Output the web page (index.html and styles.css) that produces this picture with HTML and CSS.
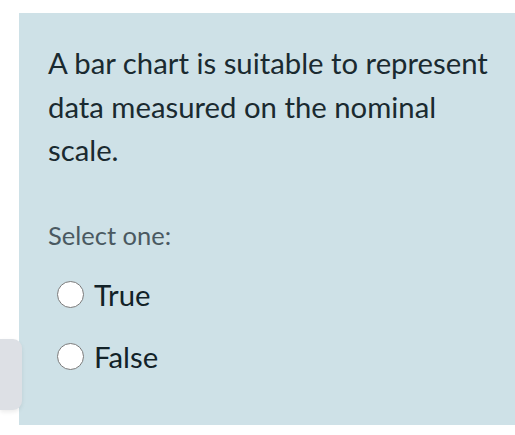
FILE: index.html
```html
<!DOCTYPE html>
<html lang="en">
<head>
<meta charset="utf-8">
<link rel="stylesheet" href="styles.css">
</head>
<body>
<div class="page">
  <div class="question">
    <p class="qtext">A bar chart is suitable to represent data measured on the nominal scale.</p>
    <div class="prompt">Select one:</div>
    <div class="answers">
      <label class="option"><span class="radio"></span><span class="label">True</span></label>
      <label class="option"><span class="radio"></span><span class="label">False</span></label>
    </div>
  </div>
</div>
<div class="drawer-tab"></div>
</body>
</html>
```
FILE: styles.css
```css
html, body {
  margin: 0;
  padding: 0;
  background: #ffffff;
}
body {
  font-family: Lato, "Open Sans", sans-serif;
  width: 515px;
  height: 435px;
  overflow: hidden;
  position: relative;
}
.page {
  padding: 13px 0 0 19px;
}
.question {
  background: #cee1e7;
  height: 412px;
  box-sizing: border-box;
  padding: 28px 20px 0 29px;
  color: #1a2a30;
}
.qtext {
  margin: 0;
  font-size: 29.3px;
  line-height: 43.5px;
}
.prompt {
  margin-top: 48.5px;
  font-size: 25.5px;
  line-height: 30px;
  color: #4a5961;
}
.answers {
  display: flex;
  flex-direction: column;
  gap: 21px;
  margin-top: 24px;
  padding-left: 9px;
}
.option {
  display: flex;
  align-items: center;
  gap: 10px;
  height: 41px;
}
.radio {
  width: 25px;
  height: 25px;
  border-radius: 50%;
  border: 1.8px solid #7a7a7a;
  background: #ffffff;
  flex: none;
}
.label {
  font-size: 29.3px;
  line-height: 41px;
  color: #122228;
}
.drawer-tab {
  position: absolute;
  left: 0;
  top: 339px;
  width: 22px;
  height: 71px;
  background: #dde0e5;
  border-radius: 0 9px 9px 0;
  box-shadow: 0 2px 4px rgba(0,0,0,0.08);
}
```
